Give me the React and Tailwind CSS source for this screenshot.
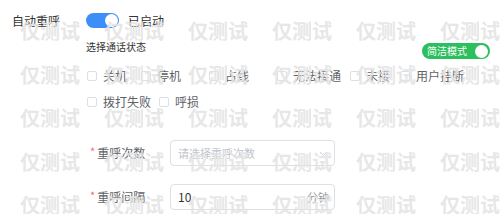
import React from "react";

const font = "font-['Noto_Sans_CJK_SC','Noto_Sans',sans-serif]";

// checkbox items with their spacing after the label
const statusRow1 = [
  { label: "关机", mr: "mr-[14px]" },
  { label: "停机", mr: "mr-[28px]" },
  { label: "占线", mr: "mr-[28px]" },
  { label: "无法接通", mr: "mr-[9px]" },
  { label: "未接", mr: "mr-[10px]" },
  { label: "用户挂断", mr: "mr-0" },
];

const statusRow2 = [
  { label: "拨打失败", mr: "mr-[8px]" },
  { label: "呼损", mr: "mr-0" },
];

const CheckItem = ({ label, mr }) => (
  <label className={`flex items-center ${mr}`}>
    <span className="w-[10px] h-[10px] border border-[#dcdfe6] rounded-[2px] bg-white" />
    <span className="ml-[6px] text-[12px] leading-[16px] text-[#606266]">{label}</span>
  </label>
);

const Watermark = () => {
  const cells = [...Array(36)];
  return (
    <div className="absolute left-[20px] top-[21px] pointer-events-none grid grid-cols-[repeat(6,84px)] auto-rows-[43.5px]">
      {cells.map((_, i) => (
        <div
          key={i}
          className="text-[20px] leading-[20px] font-bold text-[rgba(228,228,228,0.9)] whitespace-nowrap"
        >
          仅测试
        </div>
      ))}
    </div>
  );
};

export default function App() {
  return (
    <div className={`relative w-[500px] h-[214px] overflow-hidden bg-white ${font}`}>
      {/* 自动重呼 */}
      <div className="flex items-center pt-[13px] pl-[12px]">
        <div className="w-[74px] text-[12px] leading-[15px] text-[#333]">自动重呼</div>
        <div className="relative w-[33px] h-[15px] rounded-full bg-[#3d8ef8]">
          <span className="absolute right-[1px] top-[1px] w-[13px] h-[13px] rounded-full bg-white" />
        </div>
        <div className="ml-[9px] text-[12px] leading-[15px] text-[#333]">已启动</div>
      </div>

      {/* 选择通话状态 + 简洁模式 */}
      <div className="flex justify-between items-start mt-[13px] pl-[86px] pr-[10px]">
        <div className="text-[10px] leading-[12px] text-[#333]">选择通话状态</div>
        <div className="mt-[2px] flex items-center h-[16px] w-[68px] rounded-full bg-[#2cbf5d] pl-[5px] pr-[2px] justify-between">
          <span className="text-[10px] leading-[12px] text-white">简洁模式</span>
          <span className="w-[13px] h-[13px] rounded-full bg-white" />
        </div>
      </div>

      {/* 通话状态勾选 */}
      <div className="flex items-center mt-[9px] pl-[87px]">
        {statusRow1.map((s) => (
          <CheckItem key={s.label} {...s} />
        ))}
      </div>
      <div className="flex items-center mt-[10px] pl-[87px]">
        {statusRow2.map((s) => (
          <CheckItem key={s.label} {...s} />
        ))}
      </div>

      {/* 重呼次数 */}
      <div className="flex items-center mt-[30px] pl-[90px]">
        <div className="w-[80px] flex items-center">
          <span className="text-[11px] leading-[12px] text-[#f56c6c] self-start">*</span>
          <span className="ml-[2px] text-[12px] leading-[16px] text-[#606266]">重呼次数</span>
        </div>
        <div className="w-[165px] h-[26px] border border-[#dcdfe6] rounded-[4px] flex items-center justify-between pl-[7px] pr-[6px]">
          <span className="text-[11px] text-[#c0c4cc]">请选择重呼次数</span>
          <svg width="9" height="9" viewBox="0 0 10 10" fill="none" stroke="#c0c4cc" strokeWidth="1">
            <path d="M1 3.5 L5 7 L9 3.5" />
          </svg>
        </div>
      </div>

      {/* 重呼间隔 */}
      <div className="flex items-center mt-[18px] pl-[90px]">
        <div className="w-[80px] flex items-center">
          <span className="text-[11px] leading-[12px] text-[#f56c6c] self-start">*</span>
          <span className="ml-[2px] text-[12px] leading-[16px] text-[#606266]">重呼间隔</span>
        </div>
        <div className="w-[165px] h-[26px] border border-[#dcdfe6] rounded-[4px] flex items-center justify-between pl-[7px] pr-[5px]">
          <span className="text-[12px] text-[#333]">10</span>
          <span className="text-[11px] text-[#909399]">分钟</span>
        </div>
      </div>

      <Watermark />
    </div>
  );
}
